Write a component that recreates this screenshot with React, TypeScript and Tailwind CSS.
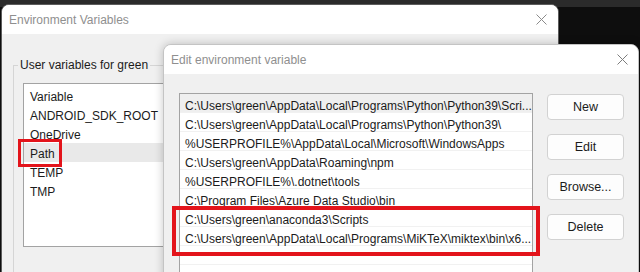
import React from "react";

const userVars = ["Variable", "ANDROID_SDK_ROOT", "OneDrive", "Path", "TEMP", "TMP"];

const pathEntries = [
  "C:\\Users\\green\\AppData\\Local\\Programs\\Python\\Python39\\Scri...",
  "C:\\Users\\green\\AppData\\Local\\Programs\\Python\\Python39\\",
  "%USERPROFILE%\\AppData\\Local\\Microsoft\\WindowsApps",
  "C:\\Users\\green\\AppData\\Roaming\\npm",
  "%USERPROFILE%\\.dotnet\\tools",
  "C:\\Program Files\\Azure Data Studio\\bin",
  "C:\\Users\\green\\anaconda3\\Scripts",
  "C:\\Users\\green\\AppData\\Local\\Programs\\MiKTeX\\miktex\\bin\\x6...",
  "",
  "",
];

function CloseIcon({ color }: { color: string }) {
  return (
    <svg width="11" height="11" viewBox="0 0 11 11" fill="none">
      <path d="M0.5 0.5L10.5 10.5M10.5 0.5L0.5 10.5" stroke={color} strokeWidth="1" />
    </svg>
  );
}

function WinButton({ label }: { label: string }) {
  return (
    <button className="w-[77px] h-[26px] rounded-[4px] border border-[#d2d2d2] bg-[#fdfdfd] text-[12.5px] text-[#1b1b1b]">
      {label}
    </button>
  );
}

export default function App() {
  return (
    <div className="relative w-[640px] h-[272px] overflow-hidden bg-[#0e0e0e] font-['Liberation_Sans',Arial,sans-serif]">
      <div className="h-[7px] bg-[#2b2b2b]" />

      {/* Environment Variables window */}
      <div className="absolute left-[1px] top-[4px] w-[558px] h-[300px] rounded-t-[8px] border border-[#5c5c5c] bg-[#f0f0f0] overflow-hidden">
        <div className="h-[29px] bg-white flex items-center justify-between pl-[7px] pr-[11px]">
          <span className="text-[12px] text-[#8f8f8f]">Environment Variables</span>
          <CloseIcon color="#8a8a8a" />
        </div>
        <fieldset className="ml-[11px] mt-[24px] w-[530px] h-[220px] border border-[#d5d5d5] pl-[4px]">
          <legend className="px-[2px] text-[12px] leading-[14px] text-[#1b1b1b]">User variables for green</legend>
          <div className="ml-[5px] mt-[11px] w-[220px] h-[164px] border border-[#a3a3a3] bg-white pt-[2px]">
            {userVars.map((v) => (
              <div
                key={v}
                className={`h-[19px] pl-[6px] pt-[3px] leading-[16px] text-[12px] text-[#1b1b1b] ${v === "Path" ? "bg-[#e9e9e9]" : ""}`}
              >
                {v}
              </div>
            ))}
          </div>
        </fieldset>
      </div>

      {/* Edit environment variable window */}
      <div className="absolute left-[163px] top-[44px] w-[476px] h-[260px] rounded-t-[8px] border border-[#c4c4c4] bg-[#f0f0f0] overflow-hidden shadow-[0_0_10px_rgba(0,0,0,0.22)]">
        <div className="h-[29px] bg-white flex items-center justify-between pl-[7px] pr-[10px]">
          <span className="text-[12px] text-[#8f8f8f]">Edit environment variable</span>
          <CloseIcon color="#7d7d7d" />
        </div>
        <div className="flex gap-[14px] pl-[15px] pt-[19px]">
          <div className="w-[354px] h-[220px] border border-[#a3a3a3] bg-white overflow-hidden">
            {pathEntries.map((p, i) => (
              <div
                key={i}
                className={`h-[19px] pl-[5px] pt-[5px] leading-[14px] text-[12px] text-[#1b1b1b] whitespace-nowrap border-b border-[#f1f1f1] ${i === 0 ? "bg-[#efefef]" : ""}`}
              >
                {p}
              </div>
            ))}
          </div>
          <div className="flex flex-col gap-[14px] pt-[1px]">
            <WinButton label="New" />
            <WinButton label="Edit" />
            <WinButton label="Browse..." />
            <WinButton label="Delete" />
          </div>
        </div>
      </div>

      {/* highlight boxes */}
      <div className="absolute left-[18px] top-[139px] w-[44px] h-[28px] border-[3px] border-[#e3141b]" />
      <div className="absolute left-[172px] top-[206px] w-[368px] h-[50px] border-[4px] border-[#e3141b]" />
    </div>
  );
}
